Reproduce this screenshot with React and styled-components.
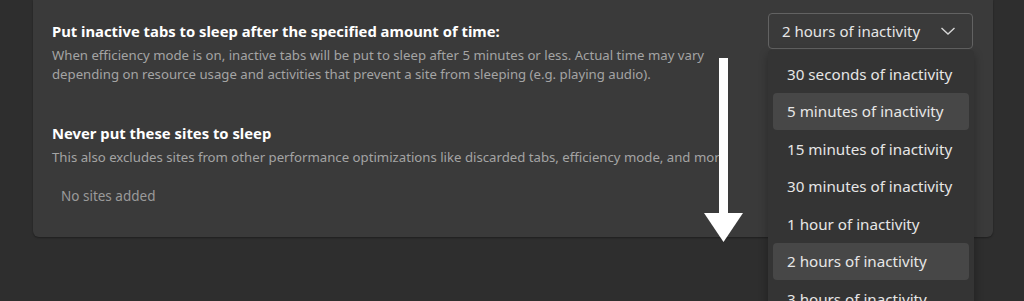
import React from "react";
import styled, { createGlobalStyle } from "styled-components";

const options = [
    "30 seconds of inactivity",
    "5 minutes of inactivity",
    "15 minutes of inactivity",
    "30 minutes of inactivity",
    "1 hour of inactivity",
    "2 hours of inactivity",
    "3 hours of inactivity",
];

const App = () => {
    return (
        <Page>
            <Global />
            <Card>
                <Row>
                    <Text>
                        <Title>Put inactive tabs to sleep after the specified amount of time:</Title>
                        <Desc>
                            When efficiency mode is on, inactive tabs will be put to sleep after 5 minutes or less. Actual time may vary
                            <br />
                            depending on resource usage and activities that prevent a site from sleeping (e.g. playing audio).
                        </Desc>
                    </Text>
                    <SelectWrap>
                        <Select>
                            <span>2 hours of inactivity</span>
                            <svg width="16" height="10" viewBox="0 0 16 10">
                                <path d="M1.5 2 L8 8 L14.5 2" fill="none" stroke="#d6d6d6" strokeWidth="1.4" />
                            </svg>
                        </Select>
                        <Menu>
                            {options.map((o, i) => (
                                <Item key={o} $active={i === 1 || i === 5}>
                                    {o}
                                </Item>
                            ))}
                        </Menu>
                    </SelectWrap>
                </Row>
                <Section>
                    <Title>Never put these sites to sleep</Title>
                    <Desc>
                        This also excludes sites from other performance optimizations like discarded tabs, efficiency mode, and more
                    </Desc>
                    <Empty>No sites added</Empty>
                </Section>
            </Card>
            <Arrow width="40" height="186" viewBox="0 0 40 186">
                <rect x="15" y="0" width="9" height="158" fill="#fff" />
                <polygon points="0,155 39,155 19.5,184" fill="#fff" />
            </Arrow>
        </Page>
    );
};

export default App;

const Global = createGlobalStyle`
    html, body {
        margin: 0;
        padding: 0;
        background: #2e2e2e;
        overflow: hidden;
    }
    body {
        font-family: "Noto Sans", "Open Sans", sans-serif;
    }
`;

const Page = styled.div`
    position: relative;
    width: 1024px;
    height: 301px;
    padding: 0 31px 0 33px;
    box-sizing: border-box;
    background: #2e2e2e;
    overflow: hidden;
`;

const Card = styled.div`
    background: #3a3a3a;
    border-radius: 0 0 6px 6px;
    padding: 13px 20px 0 19px;
    height: 237px;
    box-sizing: border-box;
    box-shadow: 0 1px 2px rgba(0, 0, 0, 0.35);
`;

const Row = styled.div`
    display: flex;
    justify-content: space-between;
    align-items: flex-start;
`;

const Text = styled.div`
    display: flex;
    flex-direction: column;
    padding-top: 8px;
`;

const Title = styled.div`
    font-size: 14.8px;
    font-weight: 700;
    line-height: 20px;
    color: #ffffff;
    margin-bottom: 5px;
`;

const Desc = styled.div`
    font-size: 13.2px;
    line-height: 19px;
    color: #a4a4a4;
    white-space: nowrap;
`;

const SelectWrap = styled.div`
    position: relative;
    width: 205px;
`;

const Select = styled.div`
    height: 36px;
    box-sizing: border-box;
    border: 1px solid #626262;
    border-radius: 4px;
    background: #3a3a3a;
    display: flex;
    align-items: center;
    justify-content: space-between;
    padding: 0 16px 0 13px;
    font-size: 15px;
    color: #e6e6e6;
`;

const Menu = styled.div`
    position: absolute;
    top: 37px;
    left: 0;
    width: 206px;
    padding: 5px 5px;
    box-sizing: border-box;
    background: #343434;
    border-radius: 4px;
    box-shadow: 0 4px 10px rgba(0, 0, 0, 0.3);
    z-index: 2;
`;

const Item = styled.div`
    height: 37.5px;
    display: flex;
    align-items: center;
    padding-left: 14px;
    border-radius: 4px;
    font-size: 15.2px;
    color: #e6e6e6;
    white-space: nowrap;
    background: ${(p) => (p.$active ? "#474747" : "transparent")};
`;

const Section = styled.div`
    margin-top: 39px;
    display: flex;
    flex-direction: column;
`;

const Empty = styled.div`
    margin-top: 20px;
    padding-left: 9px;
    font-size: 13.5px;
    color: #9a9a9a;
`;

const Arrow = styled.svg`
    position: absolute;
    left: 704px;
    top: 58px;
    z-index: 3;
`;
